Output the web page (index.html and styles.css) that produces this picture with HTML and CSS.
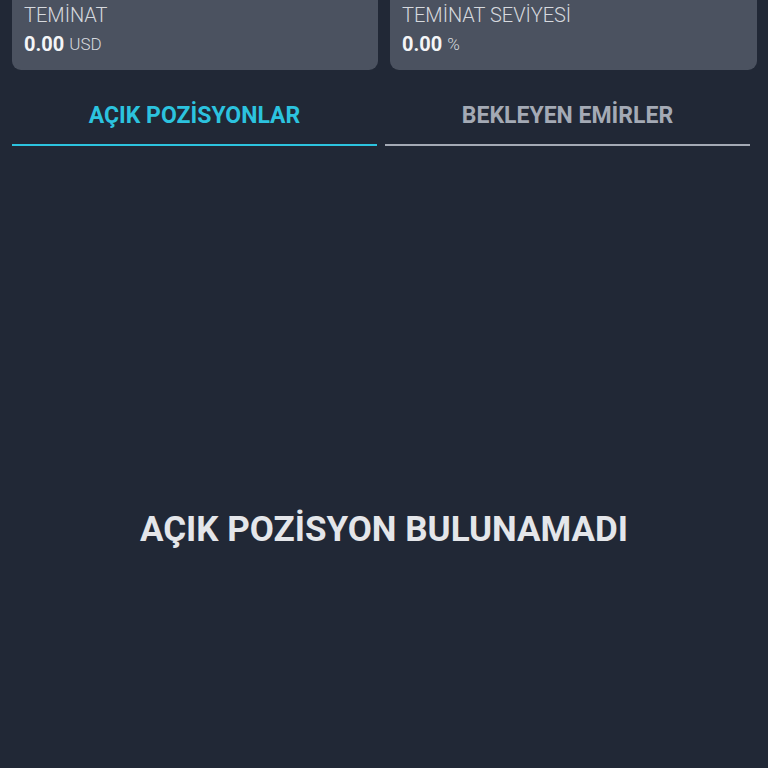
FILE: index.html
```html
<!DOCTYPE html>
<html lang="tr">
<head>
<meta charset="UTF-8">
<meta name="viewport" content="width=device-width, initial-scale=1.0">
<title>Pozisyonlar</title>
<link rel="stylesheet" href="styles.css">
</head>
<body>
<div class="stats">
  <div class="stat">
    <div class="label">TEMİNAT</div>
    <div class="value"><b>0.00</b><span>USD</span></div>
  </div>
  <div class="stat">
    <div class="label">TEMİNAT SEVİYESİ</div>
    <div class="value"><b>0.00</b><span>%</span></div>
  </div>
</div>
<div class="tabs">
  <div class="tab active">AÇIK POZİSYONLAR</div>
  <div class="tab">BEKLEYEN EMİRLER</div>
</div>
<div class="empty">AÇIK POZİSYON BULUNAMADI</div>
</body>
</html>
```
FILE: styles.css
```css
html,body{height:100%;}
body{margin:0;background:#212836;font-family:Roboto,"Noto Sans",sans-serif;color:#fff;overflow:hidden;display:flex;flex-direction:column;}
.stats{display:grid;grid-template-columns:366px 367px;gap:12px;padding:0 11px 0 12px;margin-top:-14px;}
.stat{background:#4b5260;border-radius:9px;padding:18px 12px 12px;}
.label{font-size:20px;font-weight:300;color:#d6d9de;line-height:22px;}
.value{margin-top:6px;line-height:24px;}
.value b{font-size:20px;font-weight:700;color:#f4f5f7;}
.value span{font-size:17px;font-weight:300;color:#d6d9de;margin-left:5px;vertical-align:1px;}
.tabs{display:flex;gap:8px;padding:0 18px 0 12px;margin-top:13px;}
.tab{flex:1;text-align:center;font-size:23px;font-weight:700;color:#a4aab5;padding:19px 0 14px;border-bottom:2px solid #a4aab5;line-height:28px;}
.tab.active{color:#2cc3df;border-bottom-color:#2cc3df;}
.empty{flex:1;display:flex;align-items:center;justify-content:center;font-size:35px;font-weight:700;color:#e4e6ea;padding-top:144px;}
```
